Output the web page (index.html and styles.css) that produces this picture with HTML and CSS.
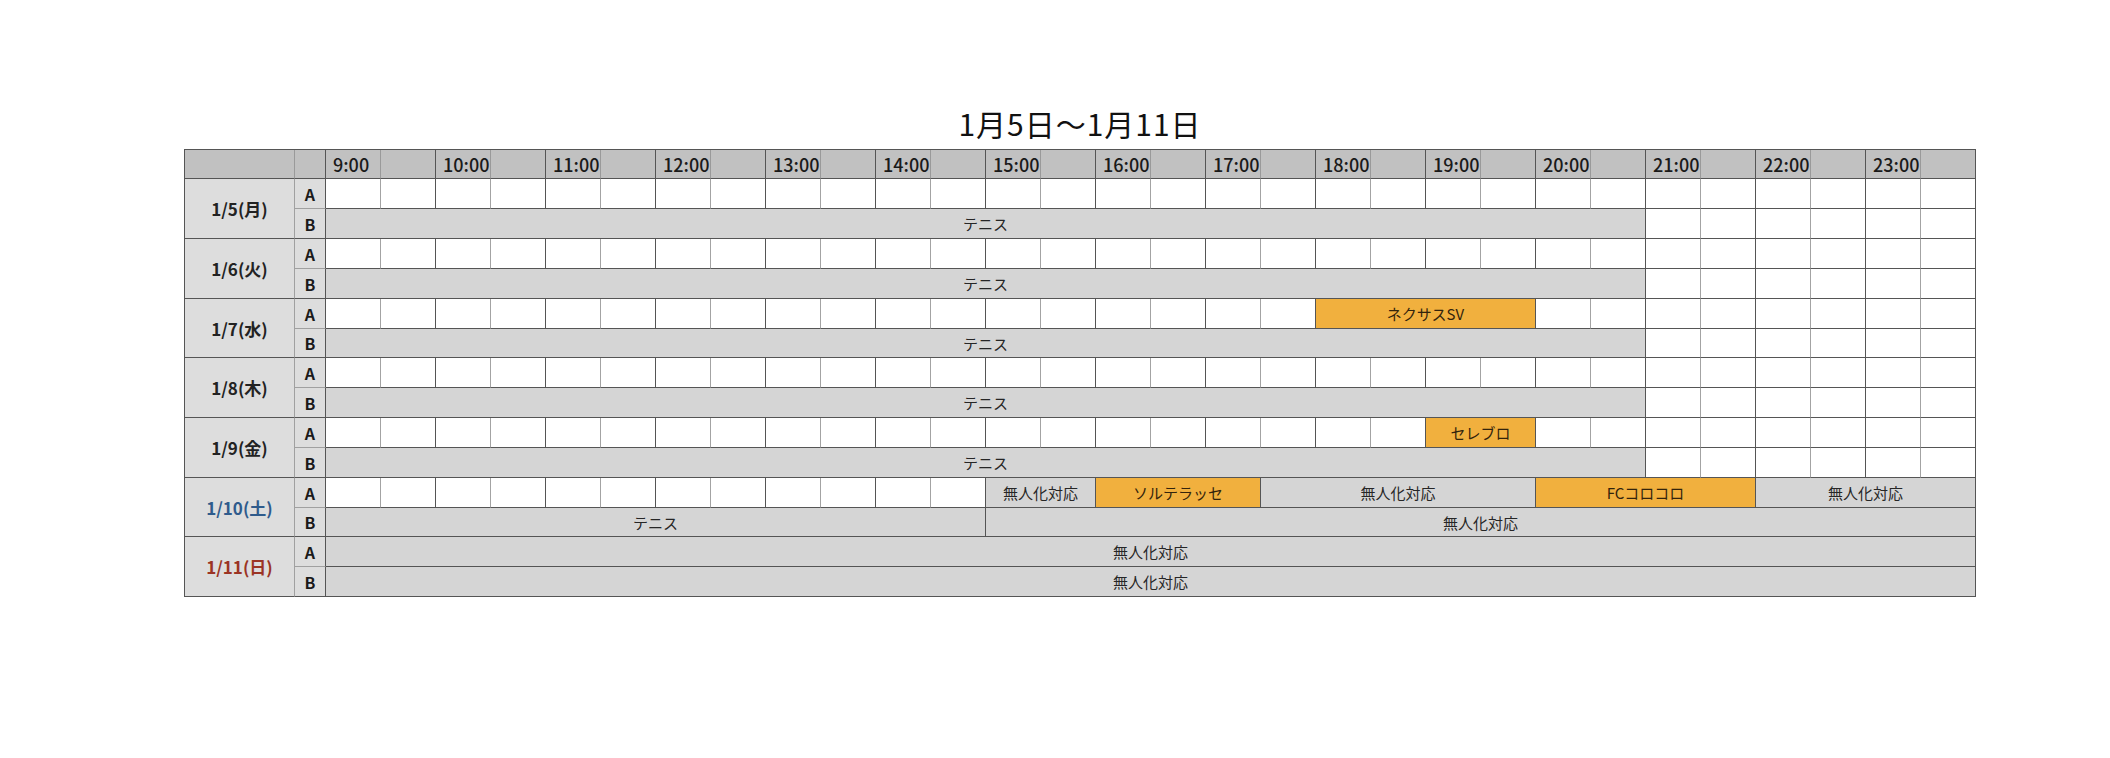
FILE: index.html
```html
<!DOCTYPE html>
<html lang="ja">
<head>
<meta charset="utf-8">
<title>1月5日〜1月11日</title>
<link rel="stylesheet" href="styles.css">
</head>
<body>
<div class="page">
  <div class="sheet">
    <h1 class="title">1月5日〜1月11日</h1>
    <div class="grid">
      <!-- header -->
      <span class="hd hd-date"></span><span class="hd hd-ab"></span>
      <span class="hd h1">9:00</span><span class="hd"></span>
      <span class="hd h1">10:00</span><span class="hd"></span>
      <span class="hd h1">11:00</span><span class="hd"></span>
      <span class="hd h1">12:00</span><span class="hd"></span>
      <span class="hd h1">13:00</span><span class="hd"></span>
      <span class="hd h1">14:00</span><span class="hd"></span>
      <span class="hd h1">15:00</span><span class="hd"></span>
      <span class="hd h1">16:00</span><span class="hd"></span>
      <span class="hd h1">17:00</span><span class="hd"></span>
      <span class="hd h1">18:00</span><span class="hd"></span>
      <span class="hd h1">19:00</span><span class="hd"></span>
      <span class="hd h1">20:00</span><span class="hd"></span>
      <span class="hd h1">21:00</span><span class="hd"></span>
      <span class="hd h1">22:00</span><span class="hd"></span>
      <span class="hd h1">23:00</span><span class="hd"></span>

      <!-- 1/5 -->
      <span class="date">1/5(月)</span><span class="lab lab-a">A</span>
      <span class="w1"></span><span class="w2"></span><span class="w1"></span><span class="w2"></span><span class="w1"></span><span class="w2"></span><span class="w1"></span><span class="w2"></span><span class="w1"></span><span class="w2"></span>
      <span class="w1"></span><span class="w2"></span><span class="w1"></span><span class="w2"></span><span class="w1"></span><span class="w2"></span><span class="w1"></span><span class="w2"></span><span class="w1"></span><span class="w2"></span>
      <span class="w1"></span><span class="w2"></span><span class="w1"></span><span class="w2"></span><span class="w1"></span><span class="w2"></span><span class="w1"></span><span class="w2"></span><span class="w1"></span><span class="w2"></span>
      <span class="lab">B</span>
      <span class="bar s24">テニス</span>
      <span class="w1"></span><span class="w2"></span><span class="w1"></span><span class="w2"></span><span class="w1"></span><span class="w2"></span>

      <!-- 1/6 -->
      <span class="date">1/6(火)</span><span class="lab lab-a">A</span>
      <span class="w1"></span><span class="w2"></span><span class="w1"></span><span class="w2"></span><span class="w1"></span><span class="w2"></span><span class="w1"></span><span class="w2"></span><span class="w1"></span><span class="w2"></span>
      <span class="w1"></span><span class="w2"></span><span class="w1"></span><span class="w2"></span><span class="w1"></span><span class="w2"></span><span class="w1"></span><span class="w2"></span><span class="w1"></span><span class="w2"></span>
      <span class="w1"></span><span class="w2"></span><span class="w1"></span><span class="w2"></span><span class="w1"></span><span class="w2"></span><span class="w1"></span><span class="w2"></span><span class="w1"></span><span class="w2"></span>
      <span class="lab">B</span>
      <span class="bar s24">テニス</span>
      <span class="w1"></span><span class="w2"></span><span class="w1"></span><span class="w2"></span><span class="w1"></span><span class="w2"></span>

      <!-- 1/7 -->
      <span class="date">1/7(水)</span><span class="lab lab-a">A</span>
      <span class="w1"></span><span class="w2"></span><span class="w1"></span><span class="w2"></span><span class="w1"></span><span class="w2"></span><span class="w1"></span><span class="w2"></span><span class="w1"></span><span class="w2"></span>
      <span class="w1"></span><span class="w2"></span><span class="w1"></span><span class="w2"></span><span class="w1"></span><span class="w2"></span><span class="w1"></span><span class="w2"></span>
      <span class="org s4">ネクサスSV</span>
      <span class="w1"></span><span class="w2"></span><span class="w1"></span><span class="w2"></span><span class="w1"></span><span class="w2"></span><span class="w1"></span><span class="w2"></span>
      <span class="lab">B</span>
      <span class="bar s24">テニス</span>
      <span class="w1"></span><span class="w2"></span><span class="w1"></span><span class="w2"></span><span class="w1"></span><span class="w2"></span>

      <!-- 1/8 -->
      <span class="date">1/8(木)</span><span class="lab lab-a">A</span>
      <span class="w1"></span><span class="w2"></span><span class="w1"></span><span class="w2"></span><span class="w1"></span><span class="w2"></span><span class="w1"></span><span class="w2"></span><span class="w1"></span><span class="w2"></span>
      <span class="w1"></span><span class="w2"></span><span class="w1"></span><span class="w2"></span><span class="w1"></span><span class="w2"></span><span class="w1"></span><span class="w2"></span><span class="w1"></span><span class="w2"></span>
      <span class="w1"></span><span class="w2"></span><span class="w1"></span><span class="w2"></span><span class="w1"></span><span class="w2"></span><span class="w1"></span><span class="w2"></span><span class="w1"></span><span class="w2"></span>
      <span class="lab">B</span>
      <span class="bar s24">テニス</span>
      <span class="w1"></span><span class="w2"></span><span class="w1"></span><span class="w2"></span><span class="w1"></span><span class="w2"></span>

      <!-- 1/9 -->
      <span class="date">1/9(金)</span><span class="lab lab-a">A</span>
      <span class="w1"></span><span class="w2"></span><span class="w1"></span><span class="w2"></span><span class="w1"></span><span class="w2"></span><span class="w1"></span><span class="w2"></span><span class="w1"></span><span class="w2"></span>
      <span class="w1"></span><span class="w2"></span><span class="w1"></span><span class="w2"></span><span class="w1"></span><span class="w2"></span><span class="w1"></span><span class="w2"></span><span class="w1"></span><span class="w2"></span>
      <span class="org s2">セレブロ</span>
      <span class="w1"></span><span class="w2"></span><span class="w1"></span><span class="w2"></span><span class="w1"></span><span class="w2"></span><span class="w1"></span><span class="w2"></span>
      <span class="lab">B</span>
      <span class="bar s24">テニス</span>
      <span class="w1"></span><span class="w2"></span><span class="w1"></span><span class="w2"></span><span class="w1"></span><span class="w2"></span>

      <!-- 1/10 -->
      <span class="date sat">1/10(土)</span><span class="lab lab-a">A</span>
      <span class="w1"></span><span class="w2"></span><span class="w1"></span><span class="w2"></span><span class="w1"></span><span class="w2"></span><span class="w1"></span><span class="w2"></span><span class="w1"></span><span class="w2"></span>
      <span class="w1"></span><span class="w2"></span>
      <span class="bar s2">無人化対応</span>
      <span class="org s3">ソルテラッセ</span>
      <span class="bar s5">無人化対応</span>
      <span class="org s4">FCコロコロ</span>
      <span class="bar s4">無人化対応</span>
      <span class="lab">B</span>
      <span class="bar s12">テニス</span>
      <span class="bar s18">無人化対応</span>

      <!-- 1/11 -->
      <span class="date sun">1/11(日)</span><span class="lab lab-a">A</span>
      <span class="bar s30">無人化対応</span>
      <span class="lab">B</span>
      <span class="bar s30">無人化対応</span>
    </div>
  </div>
</div>
</body>
</html>
```

FILE: styles.css
```css
* {
  box-sizing: border-box;
}

body {
  margin: 0;
  background: #ffffff;
  font-family: "Noto Sans CJK JP", "Noto Sans", sans-serif;
  color: #222222;
}

.page {
  padding: 106px 0 0 184px;
}

.sheet {
  width: 1792px;
}

.title {
  margin: 0 0 8px;
  height: 35px;
  line-height: 35px;
  font-size: 30px;
  font-weight: 400;
  letter-spacing: 1px;
  text-align: center;
  color: #111111;
}

.grid {
  display: grid;
  grid-template-columns: 110px 31px repeat(30, 55px);
  grid-template-rows: 29px 30px 30px 30px 30px 30px 29px 30px 30px 30px 30px 30px 29px 30px 30px;
  border-top: 1px solid #555555;
  border-left: 1px solid #555555;
}

.grid > span {
  border-right: 1px solid #555555;
  border-bottom: 1px solid #555555;
  min-width: 0;
}

/* header */
.hd {
  background: #c1c1c1;
  font-size: 18px;
  font-weight: 500;
  line-height: 28px;
  padding-left: 7px;
  white-space: nowrap;
  color: #1a1a1a;
}

.grid > .hd.h1,
.grid > .hd.hd-date {
  border-right-color: #9a9a9a;
}

/* white slots */
.w1,
.w2 {
  background: #ffffff;
}

.grid > .w1 {
  border-right-color: #a3a3a3;
}

/* day labels */
.date {
  grid-column: 1;
  grid-row: span 2;
  background: #dddddd;
  display: flex;
  align-items: center;
  justify-content: center;
  font-size: 17px;
  font-weight: 700;
  color: #222222;
}

.grid > .date {
  border-right-color: #a0a0a0;
}

.date.sat {
  color: #2f5b8c;
}

.date.sun {
  color: #9b3424;
}

.lab {
  grid-column: 2;
  background: #dddddd;
  display: flex;
  align-items: center;
  justify-content: center;
  font-size: 16px;
  font-weight: 700;
  color: #1a1a1a;
}

.grid > .lab-a {
  border-bottom-color: #a0a0a0;
}

/* booking bars */
.bar,
.org {
  display: flex;
  align-items: center;
  justify-content: center;
  font-size: 15px;
  white-space: nowrap;
}

.bar {
  background: #d5d5d5;
  color: #262626;
}

.org {
  background: #f1b03e;
  color: #33240c;
}

.s2 { grid-column: span 2; }
.s3 { grid-column: span 3; }
.s4 { grid-column: span 4; }
.s5 { grid-column: span 5; }
.s12 { grid-column: span 12; }
.s18 { grid-column: span 18; }
.s24 { grid-column: span 24; }
.s30 { grid-column: span 30; }
```
